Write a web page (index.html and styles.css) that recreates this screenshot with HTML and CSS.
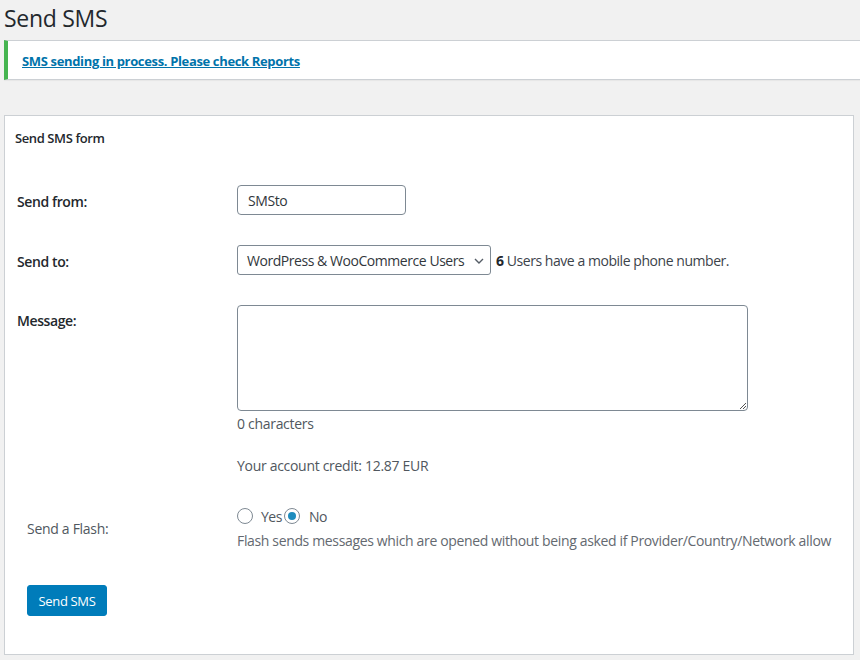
FILE: index.html
```html
<!DOCTYPE html>
<html>
<head>
<meta charset="utf-8">
<link rel="stylesheet" href="styles.css">
</head>
<body>
<div class="wrap">
  <h1 class="page-title">Send SMS</h1>
  <div class="notice">
    <a href="#" class="notice-link">SMS sending in process. Please check Reports</a>
  </div>
  <div class="card">
    <div class="card-title">Send SMS form</div>
    <div class="form-grid">
      <div class="label row-from">Send from:</div>
      <div class="field row-from"><input class="text-input" type="text" value="SMSto"></div>

      <div class="label row-to">Send to:</div>
      <div class="field row-to">
        <div class="select">WordPress &amp; WooCommerce Users
          <svg class="chev" width="10" height="6" viewBox="0 0 10 6"><path d="M1 1 L5 5 L9 1" fill="none" stroke="#555d66" stroke-width="1.4"/></svg>
        </div>
        <span class="users-info"><b>6</b> Users have a mobile phone number.</span>
      </div>

      <div class="label row-msg">Message:</div>
      <div class="field row-msg-field">
        <div class="textarea">
          <svg class="grip" width="9" height="9" viewBox="0 0 9 9"><path d="M8 2 L2 8 M8 5 L5 8" stroke="#555" stroke-width="1"/></svg>
        </div>
        <div class="chars">0 characters</div>
        <div class="credit">Your account credit: 12.87 EUR</div>
      </div>
    </div>
    <div class="flash-row">
      <div class="flash-label">Send a Flash:</div>
      <div class="flash-field">
        <div class="radios">
          <span class="radio"></span><span class="radio-text">Yes</span>
          <span class="radio checked"></span><span class="radio-text">No</span>
        </div>
        <div class="flash-desc">Flash sends messages which are opened without being asked if Provider/Country/Network allow</div>
      </div>
    </div>
    <button class="btn">Send SMS</button>
  </div>
</div>
</body>
</html>
```

FILE: styles.css
```css
html, body {
  margin: 0;
  padding: 0;
  background: #f1f1f1;
  overflow: hidden;
}
body {
  font-family: "Open Sans", "Noto Sans", sans-serif;
  color: #23282d;
  font-size: 13px;
}
.wrap {
  padding: 0 6px 0 4px;
}
.page-title {
  margin: 3px 0 0;
  font-size: 23px;
  font-weight: 400;
  line-height: 30px;
  color: #23282d;
  letter-spacing: -0.3px;
}
.notice {
  margin: 7px -20px 0 0;
  background: #fff;
  border: 1px solid #ccd0d4;
  border-left: 4px solid #46b450;
  display: flex;
  align-items: center;
  padding: 2px 0 0 14px;
  box-sizing: border-box;
  height: 40px;
  box-shadow: 0 1px 1px rgba(0,0,0,.04);
}
.notice-link {
  color: #0073aa;
  font-weight: 700;
  font-size: 13px;
  text-decoration: underline;
  letter-spacing: -0.35px;
}
.card {
  margin-top: 35px;
  background: #fff;
  border: 1px solid #ccd0d4;
  height: 540px;
  box-sizing: border-box;
  padding: 13px 0 0 10px;
}
.card-title {
  font-weight: 600;
  font-size: 13px;
  line-height: 18px;
  letter-spacing: -0.4px;
}
.form-grid {
  display: grid;
  grid-template-columns: 220px 1fr;
  margin-top: 38px;
  padding-left: 2px;
  row-gap: 30px;
}
.label {
  font-weight: 600;
  font-size: 14px;
  letter-spacing: -0.4px;
  line-height: 20px;
}
.row-from.label, .row-to.label { align-self: center; padding-top: 3px; }
.row-msg { padding-top: 6px; }
.field {
  display: flex;
  align-items: center;
}
.text-input {
  width: 169px;
  height: 30px;
  box-sizing: border-box;
  border: 1px solid #7e8993;
  border-radius: 4px;
  padding: 0 10px;
  font-family: inherit;
  font-size: 14px;
  color: #32373c;
  letter-spacing: -0.4px;
  margin: 0;
}
.select {
  width: 254px;
  height: 30px;
  box-sizing: border-box;
  border: 1px solid #7e8993;
  border-radius: 3px;
  padding: 0 0 0 9px;
  font-size: 14px;
  color: #32373c;
  display: flex;
  align-items: center;
  letter-spacing: -0.45px;
  position: relative;
  white-space: nowrap;
}
.chev {
  position: absolute;
  right: 6px;
  top: 12px;
}
.users-info {
  margin-left: 5px;
  font-size: 14px;
  letter-spacing: -0.45px;
  color: #3c434a;
}
.users-info b { color: #23282d; }
.row-msg-field {
  flex-direction: column;
  align-items: flex-start;
}
.textarea {
  width: 511px;
  height: 106px;
  box-sizing: border-box;
  border: 1px solid #7e8993;
  border-radius: 4px;
  position: relative;
}
.grip {
  position: absolute;
  right: 0;
  bottom: 0;
}
.chars {
  margin-top: 3px;
  font-size: 14px;
  line-height: 20px;
  color: #50575e;
  letter-spacing: -0.3px;
}
.credit {
  margin-top: 22px;
  font-size: 14px;
  line-height: 20px;
  color: #50575e;
  letter-spacing: -0.3px;
}
.flash-row {
  display: grid;
  grid-template-columns: 210px 1fr;
  margin-top: 30px;
  padding-left: 12px;
}
.flash-label {
  padding-top: 13px;
  font-size: 14px;
  line-height: 20px;
  color: #50575e;
  letter-spacing: -0.3px;
}
.radios {
  display: flex;
  align-items: center;
  height: 20px;
}
.radio {
  width: 16px;
  height: 16px;
  box-sizing: border-box;
  border: 1px solid #7e8993;
  border-radius: 50%;
  display: inline-block;
  position: relative;
  background: #fff;
}
.radio.checked::after {
  content: "";
  position: absolute;
  left: 3px;
  top: 3px;
  width: 8px;
  height: 8px;
  border-radius: 50%;
  background: #1e8cbe;
}
.radio-text {
  margin: 0 0 0 8px;
  font-size: 14px;
  color: #50575e;
  letter-spacing: -0.5px;
  width: 23px;
}
.radio.checked + .radio-text { margin-left: 9px; }
.flash-desc {
  margin-top: 5px;
  font-size: 14px;
  line-height: 20px;
  color: #646970;
  letter-spacing: -0.35px;
  white-space: nowrap;
}
.btn {
  display: block;
  margin: 34px 0 0 12px;
  width: 80px;
  height: 31px;
  background: #007cba;
  color: #fff;
  border: 1px solid #007cba;
  border-radius: 3px;
  font-family: inherit;
  font-size: 13px;
  letter-spacing: -0.35px;
  padding: 0;
}
```
